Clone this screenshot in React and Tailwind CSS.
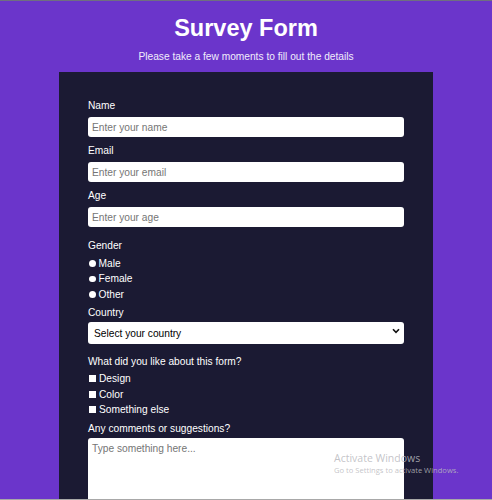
import { useState } from 'react';

const font = { fontFamily: '"Liberation Sans", Arial, sans-serif' };

function Field({ label, placeholder, className = '' }) {
  return (
    <div className={`flex flex-col ${className}`}>
      <label className="text-[10.2px] leading-[14px] text-white">{label}</label>
      <input
        type="text"
        placeholder={placeholder}
        className="mt-[4px] h-[20px] w-full rounded-[3px] bg-white px-[4px] text-[10.2px] text-black placeholder:text-[#757575] outline-none"
      />
    </div>
  );
}

function Choice({ label, square }) {
  return (
    <div className="flex h-[15.5px] items-center gap-[3px] text-[10.2px] text-white">
      <span className={square ? 'ml-[1px] h-[7px] w-[7px] bg-white' : 'ml-[1px] h-[6.5px] w-[6.5px] rounded-full bg-white'}></span>
      {label}
    </div>
  );
}

export default function App() {
  const [country, setCountry] = useState('');

  return (
    <div
      style={font}
      className="relative h-[500px] overflow-hidden border-t border-b border-t-[#6f6f80] border-b-[#a8a8a8] bg-[#6b35cb]"
    >
      <h1 className="mt-[13px] text-center text-[23.5px] font-bold leading-[28px] text-white">Survey Form</h1>
      <p className="mt-[8px] text-center text-[10.2px] leading-[14px] text-[#f1ecfb]">
        Please take a few moments to fill out the details
      </p>

      <form className="mx-auto mt-[8px] flex w-[374px] flex-col bg-[#1b1a33] px-[29px] pt-[27px] pb-8">
        <Field label="Name" placeholder="Enter your name" />
        <Field label="Email" placeholder="Enter your email" className="mt-[7px]" />
        <Field label="Age" placeholder="Enter your age" className="mt-[7px]" />

        {/* gender */}
        <div className="mt-[12px] text-[10.2px] leading-[14px] text-white">Gender</div>
        <div className="mt-[2.5px] flex flex-col">
          <Choice label="Male" />
          <Choice label="Female" />
          <Choice label="Other" />
        </div>

        <div className="mt-[3.5px] text-[10.2px] leading-[14px] text-white">Country</div>
        <div className="relative">
          <select
            value={country}
            onChange={(e) => setCountry(e.target.value)}
            className="h-[22px] w-full appearance-none rounded-[3px] bg-white px-[6px] text-[10.2px] text-black outline-none"
          >
            <option value="">Select your country</option>
            <option value="us">United States</option>
            <option value="uk">United Kingdom</option>
          </select>
          <svg className="pointer-events-none absolute right-[4px] top-[8px] h-[6px] w-[8px]" viewBox="0 0 8 6">
            <path d="M1 1.2 L4 4.4 L7 1.2" fill="none" stroke="#111" strokeWidth="1.6" />
          </svg>
        </div>

        <div className="mt-[11px] text-[10.2px] leading-[14px] text-white">What did you like about this form?</div>
        <div className="mt-[2px] flex flex-col">
          <Choice label="Design" square />
          <Choice label="Color" square />
          <Choice label="Something else" square />
        </div>

        <div className="mt-[4px] text-[10.2px] leading-[14px] text-white">Any comments or suggestions?</div>
        <textarea
          placeholder="Type something here..."
          className="mt-[2px] h-[90px] w-full resize-none rounded-[3px] bg-white px-[4px] py-[4px] text-[10.2px] leading-[14px] text-black placeholder:text-[#757575] outline-none"
        ></textarea>
      </form>

      {/* windows watermark */}
      <div
        className="pointer-events-none absolute left-[334px] top-[450px] flex flex-col text-[rgba(185,185,190,0.85)]"
        style={{ fontFamily: '"Open Sans", "Noto Sans", sans-serif' }}
      >
        <span className="text-[10.5px] leading-[14px]">Activate Windows</span>
        <span className="text-[7.6px] leading-[11px]">Go to Settings to activate Windows.</span>
      </div>
    </div>
  );
}
